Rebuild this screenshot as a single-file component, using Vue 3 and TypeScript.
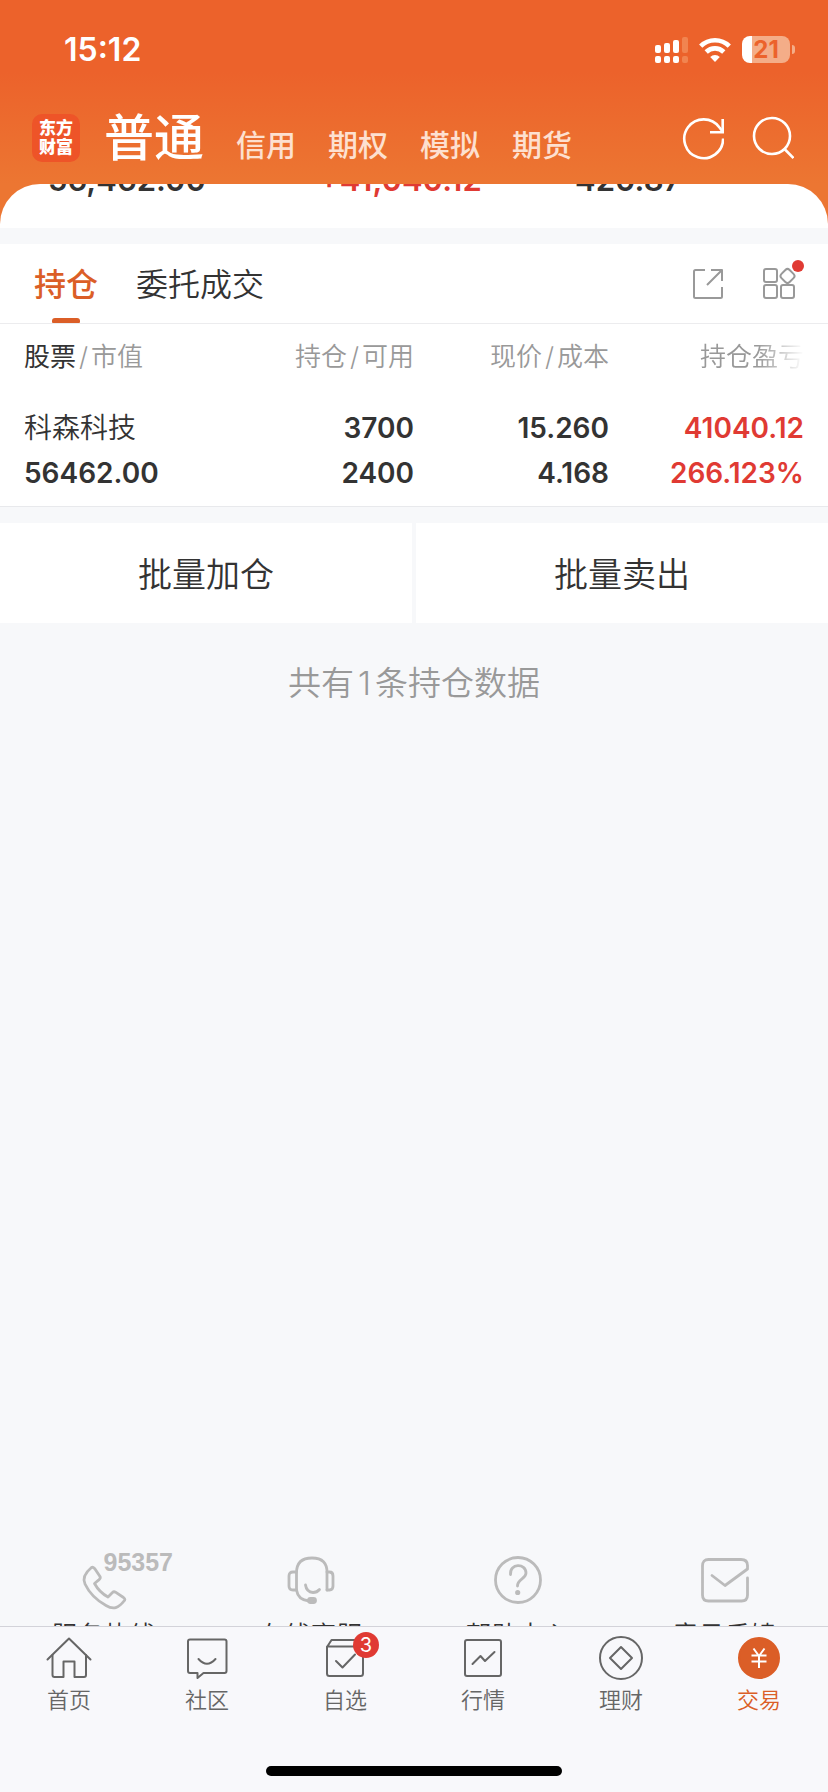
<script setup lang="ts">
import { ref } from 'vue'

interface NavItem {
  key: string
  label: string
  badge?: number
}

const accounts = ['普通', '信用', '期权', '模拟', '期货']
const account = ref('普通')
const summary = [
  { value: '56,462.00', up: false },
  { value: '+41,040.12', up: true },
  { value: '420.87', up: false },
]
const tabs = ['持仓', '委托成交']
const tab = ref('持仓')
const holdings = [
  {
    name: '科森科技',
    marketValue: '56462.00',
    held: '3700',
    available: '2400',
    price: '15.260',
    cost: '4.168',
    profit: '41040.12',
    rate: '266.123%',
  },
]
const services = [
  { key: 'phone', label: '服务热线' },
  { key: 'agent', label: '在线客服' },
  { key: 'help', label: '帮助中心' },
  { key: 'mail', label: '意见反馈' },
]
const nav: NavItem[] = [
  { key: 'home', label: '首页' },
  { key: 'community', label: '社区' },
  { key: 'watch', label: '自选', badge: 3 },
  { key: 'market', label: '行情' },
  { key: 'wealth', label: '理财' },
  { key: 'trade', label: '交易' },
]
const page = ref('trade')
</script>

<template>
  <div class="app">
    <header class="top">
      <div class="status">
        <span class="time">15:12</span>
        <div class="status-icons">
          <svg class="signal" viewBox="0 0 33 27" aria-hidden="true">
            <g fill="#fff">
              <rect x="0" y="9" width="6" height="8" rx="2" />
              <rect x="9" y="7" width="6" height="10" rx="2" />
              <rect x="18" y="4" width="6" height="13" rx="2" />
              <rect x="0" y="20" width="6" height="7" rx="2" />
              <rect x="9" y="20" width="6" height="7" rx="2" />
              <rect x="18" y="20" width="6" height="7" rx="2" />
            </g>
            <g fill="#f18450">
              <rect x="27" y="1" width="6" height="16" rx="2" />
              <rect x="27" y="20" width="6" height="7" rx="2" />
            </g>
          </svg>
          <svg class="wifi" viewBox="0 0 32 24" aria-hidden="true">
            <g fill="none" stroke="#fff" stroke-width="4.6">
              <path d="M1.7 8.2a20.3 20.3 0 0 1 28.6 0" />
              <path d="M7.2 14a12.500 12.500 0 0 1 17.600 0" />
            </g>
            <path d="M16 24l-4.800-4.900a6.800 6.800 0 0 1 9.600 0z" fill="#fff" />
          </svg>
          <div class="battery"><span>21</span></div>
        </div>
      </div>
      <div class="bar">
        <div class="logo"><span>东方</span><span>财富</span></div>
        <nav class="accounts">
          <button
            v-for="a in accounts"
            :key="a"
            type="button"
            :class="{ active: a === account }"
            @click="account = a"
          >{{ a }}</button>
        </nav>
        <button class="icon-btn" type="button" aria-label="刷新">
          <svg viewBox="0 0 42 44" width="42" height="44" fill="none" stroke="#fff" stroke-width="2.600">
            <path d="M41.100 22.500A19.400 19.400 0 1 1 37.500 11.500L40.500 15.500" />
            <path d="M40.700 3V16.200H28" />
          </svg>
        </button>
        <button class="icon-btn" type="button" aria-label="搜索">
          <svg viewBox="0 0 42 44" width="42" height="44" fill="none" stroke="#fff" stroke-width="2.600">
            <circle cx="20" cy="20" r="18" />
            <path d="M32.500 33l9 9" />
          </svg>
        </button>
      </div>
    </header>

    <main class="content">
      <div class="sheet">
        <section class="summary">
          <span v-for="s in summary" :key="s.value" :class="{ up: s.up }">{{ s.value }}</span>
        </section>
      </div>

      <section class="panel">
        <div class="tabs">
          <button
            v-for="t in tabs"
            :key="t"
            type="button"
            class="tab"
            :class="{ active: t === tab }"
            @click="tab = t"
          >{{ t }}</button>
          <div class="tools">
            <button class="icon-btn" type="button" aria-label="分享">
              <svg viewBox="0 0 32 32" width="32" height="32" fill="none" stroke="#999" stroke-width="2" stroke-linejoin="round">
                <path d="M13 2H3.500Q2 2 2 3.500V28.500Q2 30 3.500 30H28.500Q30 30 30 28.500V19" />
                <path d="M19 2H30V13M30 2L15 17" />
              </svg>
            </button>
            <button class="icon-btn dotted" type="button" aria-label="更多功能">
              <svg viewBox="0 0 34 34" width="34" height="34" fill="none" stroke="#999" stroke-width="2">
                <rect x="2" y="2" width="13" height="13" rx="2" />
                <rect x="2" y="18" width="13" height="13" rx="2" />
                <rect x="19" y="18" width="13" height="13" rx="2" />
                <rect x="19.750" y="3.250" width="11.500" height="11.500" rx="3" transform="rotate(45 25.500 9)" />
              </svg>
            </button>
          </div>
        </div>
        <table class="holdings">
          <thead>
            <tr>
              <th><b>股票</b><i>/</i>市值</th>
              <th>持仓<i>/</i>可用</th>
              <th>现价<i>/</i>成本</th>
              <th class="faded">持仓盈亏</th>
            </tr>
          </thead>
          <tbody>
            <tr v-for="h in holdings" :key="h.name">
              <td><span class="name">{{ h.name }}</span><span>{{ h.marketValue }}</span></td>
              <td><span>{{ h.held }}</span><span>{{ h.available }}</span></td>
              <td><span>{{ h.price }}</span><span>{{ h.cost }}</span></td>
              <td class="up"><span>{{ h.profit }}</span><span>{{ h.rate }}</span></td>
            </tr>
          </tbody>
        </table>
      </section>

      <div class="batch">
        <button type="button">批量加仓</button>
        <button type="button">批量卖出</button>
      </div>
      <p class="total">共有<span>{{ holdings.length }}</span>条持仓数据</p>

      <section class="services">
        <a v-for="s in services" :key="s.key" href="#" @click.prevent>
          <span class="service-icon">
            <svg viewBox="0 0 48 48" width="48" height="48" fill="none" stroke="#bbb" stroke-width="2.800" stroke-linecap="round" stroke-linejoin="round" aria-hidden="true">
              <g v-if="s.key === 'phone'">
                <path d="M11.500 11.500C13 10.500 14 12 15 13L20 20.500C21 22.300 20 23 18.500 24.200L14.500 27.500C17.500 33 22.500 38 28 41L32.500 36.500C33.500 35.500 34.300 35.500 35.500 36.200L43.500 41.500C45.500 43 45 44 44 45C38.500 52 33.500 54 26 49.500C17 44.500 9 36.500 5 28C2 21.500 5.500 16.500 11.500 11.500Z" />
              </g>
              <g v-else-if="s.key === 'agent'">
                <path d="M9.500 34V17Q9.500 2 25 2T40 17V34M9.500 34Q11 44 22 45" />
                <path d="M9.500 16H6Q2 16 2 20V30Q2 34 6 34H9.500M40 16H42.500Q46 16 46 20V30Q46 34 42.500 34H40" />
                <path d="M18.500 29Q19.500 36 26 36.500Q30 36.500 32.500 33.500" />
                <rect x="21.500" y="42.500" width="7" height="4" rx="2" fill="#bbb" />
              </g>
              <g v-else-if="s.key === 'help'">
                <circle cx="24" cy="24" r="22.500" />
                <path d="M16.500 18.500C15.500 7 32 7 32 17C32 23 23.500 23 23.500 30" />
                <circle cx="23.700" cy="36.500" r="1.200" fill="#bbb" />
              </g>
              <g v-else>
                <path d="M46.500 22V39Q46.500 45 40.500 45H7.500Q1.500 45 1.500 39V10Q1.500 3.500 7.500 3.500H40Q46.500 3.500 46.500 9.500V13L24 29.500L11 19.500" />
              </g>
            </svg>
            <em v-if="s.key === 'phone'">95357</em>
          </span>
          <span class="service-label">{{ s.label }}</span>
        </a>
      </section>
    </main>

    <footer class="dock">
      <nav>
        <button
          v-for="n in nav"
          :key="n.key"
          type="button"
          :class="{ active: n.key === page }"
          @click="page = n.key"
        >
          <span class="nav-icon">
            <svg viewBox="0 0 48 48" width="48" height="48" fill="none" stroke="currentColor" stroke-width="2" stroke-linecap="round" stroke-linejoin="round" aria-hidden="true">
              <g v-if="n.key === 'home'">
                <path d="M2.500 25.500L24 4.500L45.500 25.500" />
                <path d="M7.500 21V41Q7.500 43 9.500 43H18.500V27.500H29.500V43H39Q41 43 41 41V21" />
              </g>
              <g v-else-if="n.key === 'community'">
                <path d="M7 5.500H41.500Q43.500 5.500 43.500 7.500V37Q43.500 39 41.500 39H20.500L14.500 44V39H7Q5 39 5 37V7.500Q5 5.500 7 5.500Z" />
                <path d="M15.500 25Q24 34.500 32.500 25" />
              </g>
              <g v-else-if="n.key === 'watch'">
                <path d="M6 13L10.500 6H38L42 13V39.500Q42 42 39.500 42H8.500Q6 42 6 39.500ZM6 12.500H42" />
                <path d="M15 27L21.500 33.500L34 20.500" />
              </g>
              <g v-else-if="n.key === 'market'">
                <rect x="6" y="6" width="36" height="36" rx="2" />
                <path d="M13.500 30L21.500 22L26 27L35.500 18" />
              </g>
              <g v-else-if="n.key === 'wealth'">
                <circle cx="24" cy="24" r="21" />
                <path d="M24 13L35 24L24 35L13 24Z" />
              </g>
              <g v-else>
                <circle cx="24" cy="24" r="20" fill="#db5e27" />
                <path d="M18.500 14.500L24 22L29.500 14.500M24 22V34M16.500 21.500H31.500M16.500 27.500H31.500" stroke="#fff" stroke-linecap="butt" />
              </g>
            </svg>
            <i v-if="n.badge">{{ n.badge }}</i>
          </span>
          <span>{{ n.label }}</span>
        </button>
      </nav>
      <div class="home-bar"></div>
    </footer>
  </div>
</template>

<style>
body {
  margin: 0;
}
</style>

<style scoped>
.app {
  display: flex;
  flex-direction: column;
  height: 100vh;
  overflow: hidden;
  background: #f7f8fa;
  color: #333;
  font-family: Inter, "Noto Sans CJK SC", sans-serif;
  font-weight: 350;
}
button {
  padding: 0;
  border: 0;
  background: none;
  color: inherit;
  font: inherit;
  cursor: pointer;
}
svg {
  display: block;
}
.top {
  flex: none;
  height: 228px;
  margin-bottom: -44px;
  background: linear-gradient(#ec622b 72px, #ec7632 184px);
  color: #fff;
}
.status {
  display: flex;
  justify-content: space-between;
  align-items: center;
  height: 99px;
  padding: 0 33px 0 64px;
}
.time {
  font-size: 32px;
  font-weight: 600;
}
.status-icons {
  display: flex;
  align-items: center;
  gap: 11px;
}
.signal {
  width: 33px;
  height: 27px;
}
.wifi {
  width: 32px;
  height: 24px;
}
.battery {
  position: relative;
  width: 48px;
  height: 27px;
  margin-right: 5px;
  border-radius: 8px;
  background: linear-gradient(90deg, #fff 10px, #f4ad88 10px);
  color: #ec622b;
  font-size: 24px;
  font-weight: 700;
  line-height: 27px;
  text-align: center;
}
.battery::after {
  content: "";
  position: absolute;
  top: 9px;
  right: -5px;
  width: 3px;
  height: 9px;
  border-radius: 0 4px 4px 0;
  background: #f4ad88;
}
.bar {
  display: flex;
  align-items: center;
  gap: 28px;
  height: 78px;
  padding: 0 34px 0 32px;
}
.logo {
  display: flex;
  flex-direction: column;
  align-items: center;
  justify-content: center;
  width: 48px;
  height: 48px;
  margin-right: -4px;
  border-radius: 10px;
  background: #ee5428;
  font-size: 17px;
  font-weight: 900;
  line-height: 19px;
}
.accounts {
  display: flex;
  flex: 1;
  align-items: baseline;
  gap: 32px;
  padding-top: 6px;
}
.accounts button {
  color: #fde0d0;
  font-size: 30px;
  font-weight: 500;
  line-height: 60px;
}
.accounts .active {
  color: #fff;
  font-size: 50px;
}
.content {
  display: flex;
  flex: 1;
  flex-direction: column;
  min-height: 0;
  overflow: hidden;
}
.sheet {
  flex: none;
  border-bottom: 16px solid #f7f8fa;
}
.summary {
  display: grid;
  grid-template-columns: 37% 35% 28%;
  align-content: end;
  box-sizing: border-box;
  height: 44px;
  padding: 0 48px 28px;
  overflow: hidden;
  border-radius: 40px 40px 0 0;
  background: #fff;
  font-size: 31px;
  font-weight: 600;
  line-height: 40px;
}
.up {
  color: #e03a33;
}
.panel {
  flex: none;
  border-bottom: 1px solid #e8e9ec;
  background: #fff;
}
.tabs {
  display: flex;
  align-items: stretch;
  gap: 38px;
  height: 79px;
  padding: 0 32px 0 34px;
  border-bottom: 1px solid #ececee;
}
.tab {
  position: relative;
  padding-bottom: 4px;
  font-size: 32px;
}
.tab.active {
  color: #db5e27;
  font-weight: 500;
}
.tab.active::after {
  content: "";
  position: absolute;
  bottom: 0;
  left: calc(50% - 14px);
  width: 28px;
  height: 5px;
  border-radius: 3px 3px 1px 1px;
  background: #db5e27;
}
.tools {
  display: flex;
  flex: 1;
  justify-content: flex-end;
  align-items: center;
  gap: 38px;
}
.dotted {
  position: relative;
}
.dotted::after {
  content: "";
  position: absolute;
  top: -7px;
  right: -8px;
  width: 12px;
  height: 12px;
  border-radius: 50%;
  background: #e03a33;
}
.holdings {
  width: 100%;
  padding: 0 24px;
  border-spacing: 0;
  table-layout: fixed;
}
.holdings th {
  height: 60px;
  padding: 0 0 4px;
  color: #999;
  font-size: 26px;
  font-weight: 350;
  text-align: right;
}
.holdings b {
  color: #333;
  font-weight: 400;
}
.holdings i {
  padding: 0 3px;
  font-style: normal;
}
.holdings .faded {
  mask-image: linear-gradient(270deg, transparent, #000 46px);
}
.holdings td {
  padding: 18px 0 10px;
  font-size: 28px;
  font-weight: 600;
  line-height: 45px;
  text-align: right;
}
.holdings th:first-child,
.holdings td:first-child {
  text-align: left;
}
.holdings td span {
  display: block;
}
.holdings .name {
  font-weight: 350;
}
.batch {
  display: grid;
  flex: none;
  grid-template-columns: 1fr 1fr;
  gap: 4px;
  margin-top: 16px;
}
.batch button {
  height: 100px;
  padding-bottom: 2px;
  background: #fff;
  font-size: 34px;
}
.total {
  margin: 36px 0 0;
  color: #999;
  font-size: 33px;
  line-height: 48px;
  text-align: center;
}
.total span {
  padding: 0 4px;
}
.services {
  display: grid;
  flex: none;
  grid-template-columns: repeat(4, 1fr);
  height: 70px;
  margin-top: auto;
  overflow: hidden;
  padding-top: 20px;
}
.services a {
  display: flex;
  flex-direction: column;
  align-items: center;
  gap: 18px;
  color: #333;
  text-decoration: none;
}
.service-icon {
  position: relative;
}
.service-icon svg {
  overflow: visible;
}
.service-icon em {
  position: absolute;
  top: -6px;
  left: 24px;
  color: #bbb;
  font: 700 25px/25px "Liberation Sans", sans-serif;
}
.service-label {
  font-size: 26px;
  line-height: 28px;
}
.dock {
  flex: none;
  border-top: 1px solid #d3d3d9;
  background: #f8f8fb;
}
.dock nav {
  display: grid;
  grid-template-columns: repeat(6, 1fr);
  height: 139px;
}
.dock button {
  display: flex;
  flex-direction: column;
  align-items: center;
  gap: 2px;
  padding-top: 7px;
  color: #666;
  font-size: 22px;
  line-height: 32px;
}
.dock .active {
  color: #db5e27;
}
.nav-icon {
  position: relative;
}
.nav-icon i {
  position: absolute;
  top: -2px;
  right: -10px;
  width: 26px;
  height: 26px;
  border-radius: 50%;
  background: #e03a33;
  color: #fff;
  font-size: 20px;
  font-style: normal;
  font-weight: 400;
  line-height: 26px;
}
.home-bar {
  width: 296px;
  height: 10px;
  margin: 0 auto 16px;
  border-radius: 5px;
  background: #000;
}
</style>
